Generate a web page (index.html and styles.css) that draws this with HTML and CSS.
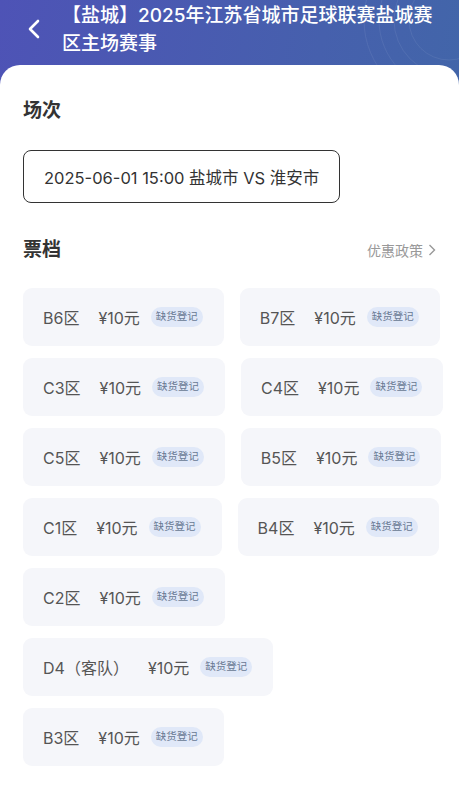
FILE: index.html
```html
<!DOCTYPE html>
<html lang="zh-CN">
<head>
    <meta charset="UTF-8">
    <title>票档选择</title>
    <link rel="stylesheet" href="styles.css">
</head>
<body>
<div class="page">
    <div class="header">
        <svg class="deco" width="200" height="90" viewBox="0 0 200 90">
            <circle cx="190" cy="20" r="40" />
            <circle cx="190" cy="20" r="55" />
            <circle cx="190" cy="20" r="70" />
            <circle cx="190" cy="20" r="85" />
        </svg>
        <a href="#" class="back">
            <svg width="14" height="20" viewBox="0 0 14 20"><path d="M11 2 L3 10 L11 18" /></svg>
        </a>
        <h1 class="title">【盐城】2025年江苏省城市足球联赛盐城赛区主场赛事</h1>
    </div>
    <div class="sheet">
        <h2 class="section-title">场次</h2>
        <div class="session">2025-06-01 15:00 盐城市 VS 淮安市</div>

        <div class="section-head">
            <h2 class="section-title">票档</h2>
            <a href="#" class="policy">优惠政策
                <svg width="8" height="12" viewBox="0 0 8 12"><path d="M1.5 1 L6.5 6 L1.5 11" /></svg>
            </a>
        </div>

        <ul class="tickets">
            <li class="ticket"><span class="zone">B6区</span><span class="price">¥10元</span><span class="tag">缺货登记</span></li>
            <li class="ticket"><span class="zone">B7区</span><span class="price">¥10元</span><span class="tag">缺货登记</span></li>
            <li class="ticket"><span class="zone">C3区</span><span class="price">¥10元</span><span class="tag">缺货登记</span></li>
            <li class="ticket"><span class="zone">C4区</span><span class="price">¥10元</span><span class="tag">缺货登记</span></li>
            <li class="ticket"><span class="zone">C5区</span><span class="price">¥10元</span><span class="tag">缺货登记</span></li>
            <li class="ticket"><span class="zone">B5区</span><span class="price">¥10元</span><span class="tag">缺货登记</span></li>
            <li class="ticket"><span class="zone">C1区</span><span class="price">¥10元</span><span class="tag">缺货登记</span></li>
            <li class="ticket"><span class="zone">B4区</span><span class="price">¥10元</span><span class="tag">缺货登记</span></li>
            <li class="ticket"><span class="zone">C2区</span><span class="price">¥10元</span><span class="tag">缺货登记</span></li>
            <li class="ticket"><span class="zone">D4（客队）</span><span class="price">¥10元</span><span class="tag">缺货登记</span></li>
            <li class="ticket"><span class="zone">B3区</span><span class="price">¥10元</span><span class="tag">缺货登记</span></li>
        </ul>
    </div>
</div>
</body>
</html>
```

FILE: styles.css
```css
*{ padding: 0; margin: 0; box-sizing: border-box;}
li{ list-style: none}
a{ text-decoration: none}
html, body{ height: 100%}
body{ font-family: Inter, "Noto Sans CJK SC", sans-serif; color: #333; background: #fff}

.page{ min-height: 100%; display: flex; flex-direction: column;
    background: linear-gradient(100deg, #4e53b6 0%, #4660ad 55%, #3f6aa6 100%)}

.header{ height: 65px; position: relative; display: flex; align-items: flex-start; overflow: hidden}
.header .deco{ position: absolute; right: 0; top: 0}
.header .deco circle{ fill: none; stroke: rgba(255,255,255,0.07); stroke-width: 1}
.back{ width: 62px; height: 58px; display: flex; align-items: center; padding-left: 27px; flex-shrink: 0}
.back path{ fill: none; stroke: #fff; stroke-width: 2.6; stroke-linecap: round; stroke-linejoin: round}
.title{ width: 375px; padding-top: 2px; color: #fff; font-size: 19px; line-height: 28px; font-weight: 500}

.sheet{ flex: 1; background: #fff; border-radius: 20px 20px 0 0; padding: 32px 12px 20px 23px}
.section-title{ font-size: 19px; line-height: 28px; font-weight: 600; color: #333}
.session{ display: inline-flex; align-items: center; height: 53px; margin-top: 25px;
    padding: 0 20px; border: 1.5px solid #333; border-radius: 8px;
    font-size: 16.5px; color: #333}

.section-head{ display: flex; justify-content: space-between; align-items: center; margin-top: 33px; padding-right: 11px}
.policy{ display: flex; align-items: center; gap: 5px; font-size: 14px; color: #999}
.policy path{ fill: none; stroke: #999; stroke-width: 1.4}

.tickets{ display: flex; flex-wrap: wrap; gap: 12px 16px; margin-top: 24px}
.ticket{ display: flex; align-items: center; height: 58px; padding: 0 21px 0 20px;
    background: #f5f6fa; border-radius: 9px; font-size: 16px; color: #555}
.zone{ margin-right: 19px}
.price{ margin-right: 11px}
.tag{ height: 20px; line-height: 20px; padding: 0 5px; border-radius: 10px;
    background: #e0e8f8; color: #687893; font-size: 10.5px}
```
